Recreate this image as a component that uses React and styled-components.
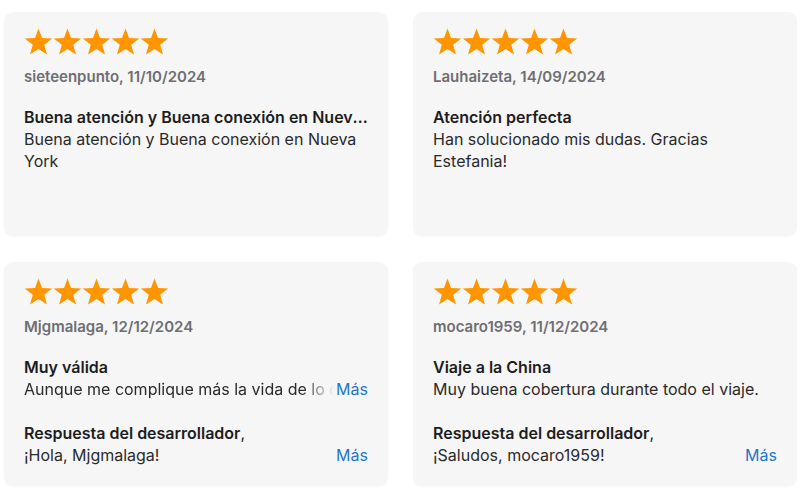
import styled, { createGlobalStyle } from 'styled-components';

const GlobalStyle = createGlobalStyle`
  body {
    margin: 0;
    background: #fff;
    font-family: Inter, "Noto Sans", sans-serif;
    color: #1d1d1f;
  }
`;

const Grid = styled.div`
  display: grid;
  grid-template-columns: 384px 384px;
  column-gap: 25px;
  row-gap: 26px;
  padding: 12px 4px;
`;

const Card = styled.div`
  height: 224px;
  box-sizing: border-box;
  padding: 16px 20px 0 20px;
  background: #f6f6f6;
  border-radius: 9px;
  box-shadow: 0 1px 2px rgba(0, 0, 0, 0.03);
  display: flex;
  flex-direction: column;
`;

const Stars = styled.div`
  display: flex;
  height: 28px;
`;

const Meta = styled.div`
  margin-top: 11px;
  font-size: 15px;
  line-height: 20px;
  font-weight: 600;
  color: #6e6e73;
`;

const Title = styled.div`
  margin-top: ${(p) => p.$gap || 19}px;
  font-size: 16px;
  line-height: 22px;
  font-weight: 600;
  white-space: nowrap;
  overflow: hidden;
  text-overflow: ellipsis;
`;

const Body = styled.div`
  font-size: 16px;
  line-height: 22px;
  color: #2a2a2c;
`;

const Line = styled.div`
  display: flex;
  align-items: baseline;
  font-size: 16px;
  line-height: 22px;
  color: #2a2a2c;
`;

const Clipped = styled.span`
  flex: 1;
  white-space: nowrap;
  overflow: hidden;
  ${(p) => p.$fade && 'mask-image: linear-gradient(to right, #000 calc(100% - 32px), transparent);'}
`;

const More = styled.span`
  color: #1f77cc;
  margin-left: 2px;
`;

function Star() {
  return (
    <svg width="29" height="28" viewBox="0 0 29 28">
      <polygon
        fill="#ff9500"
        points="14.5,0.5 18,10 28.2,10.4 20.2,16.7 23,26.6 14.5,20.9 6,26.6 8.8,16.7 0.8,10.4 11,10"
      />
    </svg>
  );
}

function Rating() {
  return (
    <Stars>
      {[0, 1, 2, 3, 4].map((i) => (
        <Star key={i} />
      ))}
    </Stars>
  );
}

const reviews = [
  {
    meta: 'sieteenpunto, 11/10/2024',
    title: 'Buena atención y Buena conexión en Nueva York',
    body: 'Buena atención y Buena conexión en Nueva York',
  },
  {
    meta: 'Lauhaizeta, 14/09/2024',
    title: 'Atención perfecta',
    body: 'Han solucionado mis dudas. Gracias Estefania!',
  },
  {
    meta: 'Mjgmalaga, 12/12/2024',
    title: 'Muy válida',
    line: 'Aunque me complique más la vida de lo que esperaba',
    fade: true,
    reply: '¡Hola, Mjgmalaga!',
  },
  {
    meta: 'mocaro1959, 11/12/2024',
    title: 'Viaje a la China',
    line: 'Muy buena cobertura durante todo el viaje.',
    reply: '¡Saludos, mocaro1959!',
  },
];

function Review({ review }) {
  return (
    <Card>
      <Rating />
      <Meta>{review.meta}</Meta>
      <Title>{review.title}</Title>
      {review.body && <Body>{review.body}</Body>}
      {review.line && (
        <Line>
          <Clipped $fade={review.fade}>{review.line}</Clipped>
          {review.fade && <More>Más</More>}
        </Line>
      )}
      {review.reply && (
        <>
          <Title $gap={22}>
            Respuesta del desarrollador<span style={{ fontWeight: 400 }}>,</span>
          </Title>
          <Line>
            <Clipped>{review.reply}</Clipped>
            <More>Más</More>
          </Line>
        </>
      )}
    </Card>
  );
}

export default function App() {
  return (
    <>
      <GlobalStyle />
      <Grid>
        {reviews.map((r) => (
          <Review key={r.meta} review={r} />
        ))}
      </Grid>
    </>
  );
}
